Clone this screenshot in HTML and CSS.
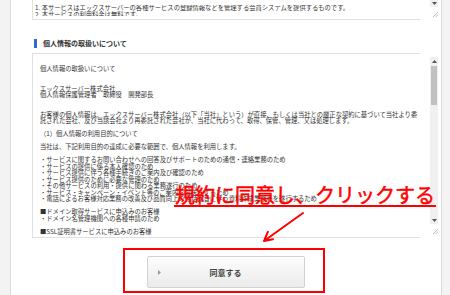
FILE: index.html
```html
<!DOCTYPE html>
<html lang="ja">
<head>
    <meta charset="UTF-8">
    <meta name="viewport" content="width=device-width, initial-scale=1.0">
    <title>利用規約への同意</title>
    <link rel="stylesheet" href="styles.css">
</head>
<body>
    <div class="page">
        <div class="terms terms-service">
            <div class="terms-box">
                <div class="terms-text">
                    <p>1. 本サービスはエックスサーバーの各種サービスの登録情報などを管理する会員システムを提供するものです。</p>
                    <p>2. 本サービスの利用料金は無料です。</p>
                </div>
            </div>
            <div class="scrollbar">
                <span class="arrow">
                    <svg width="5" height="3" viewBox="0 0 5 3"><path d="M0 0h5L2.5 3z" fill="#555"/></svg>
                </span>
                <span class="grip">
                    <svg width="6" height="6" viewBox="0 0 6 6"><path d="M1 6L6 1M3.5 6L6 3.5" stroke="#aaa" stroke-width="0.8"/></svg>
                </span>
            </div>
        </div>

        <h3 class="section-title">個人情報の取扱いについて</h3>

        <div class="terms terms-privacy">
            <div class="terms-box">
                <p>個人情報の取扱いについて</p>
                <p class="gap-2">エックスサーバー株式会社<br>個人情報保護管理者　取締役　開発部長</p>
                <p class="gap-2">お客様の個人情報は、エックスサーバー株式会社（以下「当社」という）が直接、もしくは当社との厳正な契約に基づいて当社より委<br>託された会社、及び当該会社より再委託された会社が、当社に代わって、取得、保管、管理、又は処理します。</p>
                <p class="gap-1">（1）個人情報の利用目的について</p>
                <p class="gap-1">当社は、下記利用目的の達成に必要な範囲で、個人情報を利用します。</p>
                <ul class="gap-1">
                    <li>・サービスに関するお問い合わせへの回答及びサポートのための通信・連絡業務のため</li>
                    <li>・サービスの提供に係る本人確認のため</li>
                    <li>・サービス提供に伴う各種手続きのご案内及び確認のため</li>
                    <li>・サービス提供のために必要な管理のため</li>
                    <li>・その他サービスの利用・提供に関わる業務遂行のため</li>
                    <li>・サービス・キャンペーン・イベント等のご案内をお送りするため</li>
                    <li>・電話によるお客様対応業務の改善及び品質向上の通話録音に伴う資料作成業務等を遂行するため</li>
                </ul>
                <p class="gap-1">■ドメイン取得サービスに申込みのお客様<br>・ドメイン名管理機関への各種申請のため</p>
                <p class="gap-1">■SSL証明書サービスに申込みのお客様</p>
            </div>
            <div class="scrollbar">
                <span class="arrow">
                    <svg width="5" height="3" viewBox="0 0 5 3"><path d="M0 3h5L2.5 0z" fill="#555"/></svg>
                </span>
                <span class="track"><span class="thumb"></span></span>
                <span class="arrow">
                    <svg width="5" height="3" viewBox="0 0 5 3"><path d="M0 0h5L2.5 3z" fill="#555"/></svg>
                </span>
                <span class="grip">
                    <svg width="6" height="6" viewBox="0 0 6 6"><path d="M1 6L6 1M3.5 6L6 3.5" stroke="#aaa" stroke-width="0.8"/></svg>
                </span>
            </div>
        </div>

        <div class="agree">
            <div class="agree-frame">
                <button class="agree-button">
                    <svg class="agree-mark" width="3" height="5" viewBox="0 0 3 5"><path d="M0 0v5l3-2.5z" fill="#999"/></svg>
                    <span class="agree-label">同意する</span>
                </button>
            </div>
        </div>
    </div>

    <!-- annotation drawn over the page -->
    <p class="note">規約に同意し、クリックする</p>
    <svg class="note-arrow" width="50" height="38" viewBox="0 0 50 38">
        <path d="M45 5L6 33M15 31.3L6 33L9.9 23.9" fill="none" stroke="#f00" stroke-width="2" stroke-linecap="round" stroke-linejoin="round"/>
    </svg>
</body>
</html>
```

FILE: styles.css
```css
body {
    margin: 0;
    background: #f3f3f3;
    font-family: "Noto Sans CJK JP", sans-serif;
    color: #333;
}
p, ul, h3 {
    margin: 0;
    padding: 0;
}
ul {
    list-style: none;
}
.page {
    width: 432px;
    height: 295px;
    margin-left: 10px;
    padding-left: 21px;
    box-sizing: border-box;
    background: #fff;
    border-left: 1px solid #dcdcdc;
    border-right: 1px solid #dcdcdc;
    overflow: hidden;
}
.terms {
    display: flex;
}
.terms-box {
    width: 388px;
    box-sizing: border-box;
    border: 1px solid #e0e0e0;
    border-right: none;
    font-size: 6.3px;
    line-height: 6.5px;
    white-space: nowrap;
    overflow: hidden;
}
.terms-service .terms-box {
    height: 20px;
    border-top: none;
    padding: 5px 0 3px 2px;
}
.terms-text {
    height: 100%;
    overflow: hidden;
}
.terms-privacy {
    margin-top: 5px;
}
.terms-privacy .terms-box {
    height: 185px;
    padding: 12px 0 0 7px;
}
.gap-1 {
    margin-top: 6.5px;
}
.gap-2 {
    margin-top: 13px;
}
.scrollbar {
    width: 8px;
    margin-left: 10px;
    display: flex;
    flex-direction: column;
}
.terms-service .scrollbar {
    margin-bottom: 2px;
}
.terms-privacy .scrollbar {
    margin: 4px 0 4px 10px;
}
.arrow {
    height: 8px;
    background: #f0f0f0;
    display: flex;
    align-items: center;
    justify-content: center;
}
.terms-service .arrow {
    height: 7px;
}
.track {
    flex: 1;
    background: #f0f0f0;
    padding-top: 1px;
}
.thumb {
    display: block;
    height: 39px;
    margin: 0 1px;
    background: #c1c1c1;
}
.grip {
    height: 8px;
    margin-top: 2px;
    display: flex;
    align-items: flex-end;
    justify-content: flex-end;
}
.section-title {
    margin: 19px 0 0 2px;
    height: 9px;
    border-left: 3px solid #2f6fbf;
    padding-left: 6px;
    font-size: 7px;
    line-height: 9px;
    font-weight: bold;
    color: #333;
}
.agree {
    margin-top: 10px;
    display: flex;
    justify-content: center;
    padding-right: 26px;
}
.agree-frame {
    border: 2px solid #f00;
    padding: 6px 18px 3px 22px;
}
.agree-button {
    width: 158px;
    height: 32px;
    border: 1px solid #d2d2d2;
    border-radius: 2px;
    background: linear-gradient(#fdfdfd, #ebebeb);
    display: grid;
    grid-template-columns: 14px 1fr 14px;
    align-items: center;
    padding: 0;
    font-family: "Noto Sans CJK JP", sans-serif;
}
.agree-mark {
    margin-left: 10px;
}
.agree-label {
    font-size: 8px;
    font-weight: bold;
    color: #444;
    text-align: center;
}
.note {
    position: absolute;
    left: 174px;
    top: 185px;
    padding: 0 1px;
    font-size: 20px;
    line-height: 20px;
    color: #f00;
    -webkit-text-stroke: 0.5px #f00;
    border-bottom: 2px solid #f00;
    white-space: nowrap;
}
.note-arrow {
    position: absolute;
    left: 258px;
    top: 208px;
}
```
